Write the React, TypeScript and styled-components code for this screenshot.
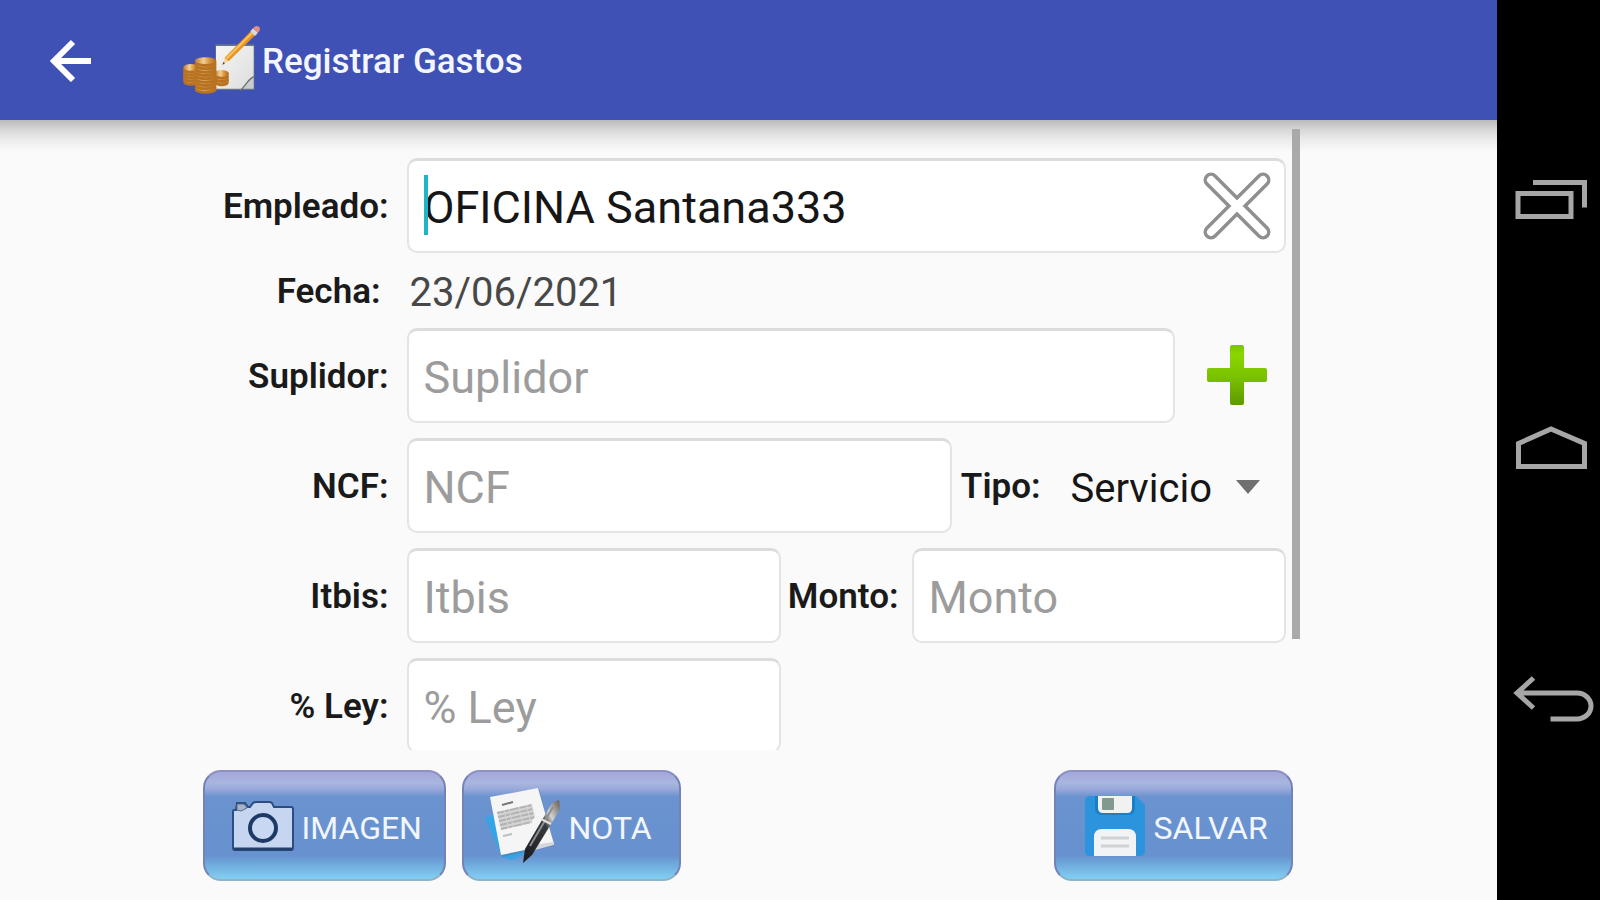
import React from "react";
import styled, { createGlobalStyle } from "styled-components";

const GlobalStyle = createGlobalStyle`
  *, *::before, *::after { box-sizing: border-box; }
  body {
    margin: 0;
    background: #fafafa;
    font-family: Roboto, "Noto Sans", sans-serif;
    color: #1a1a1a;
  }
  button, input, select { font-family: inherit; }
`;

const Screen = styled.div`
  display: flex;
  height: 100vh;
`;

const AppPane = styled.div`
  flex: 1;
  min-width: 0;
  display: flex;
  flex-direction: column;
  background: #fafafa;
`;

const AppBar = styled.header`
  position: relative;
  display: flex;
  align-items: center;
  height: 120px;
  flex: none;
  padding-left: 41px;
  background: #3f51b5;

  &::after {
    content: "";
    position: absolute;
    top: 100%;
    left: 0;
    right: 0;
    height: 32px;
    background: linear-gradient(
      rgba(0, 0, 0, 0.26),
      rgba(0, 0, 0, 0.14) 30%,
      rgba(0, 0, 0, 0.05) 65%,
      rgba(0, 0, 0, 0)
    );
    pointer-events: none;
  }
`;

const IconButton = styled.button<{ $width: number; $height: number }>`
  display: flex;
  align-items: center;
  justify-content: center;
  flex: none;
  width: ${(p) => p.$width}px;
  height: ${(p) => p.$height}px;
  padding: 0;
  border: 0;
  background: none;
  cursor: pointer;
`;

const Brand = styled.div`
  display: flex;
  align-items: center;
  margin-left: 82px;
`;

const Title = styled.h1`
  margin: 0;
  padding-top: 4px;
  font-size: 35px;
  line-height: 44px;
  font-weight: 500;
  color: #f4f6ff;
`;

const Form = styled.form`
  flex: 1;
  min-height: 0;
  display: flex;
  flex-direction: column;
  width: 100%;
  max-width: 1102px;
  margin: 0 auto;
`;

const ScrollPane = styled.div`
  flex: 1;
  min-height: 0;
  display: flex;
`;

const Fields = styled.div`
  flex: 1;
  min-width: 0;
  padding: 30px 6px 0 0;
  overflow-y: auto;
  scrollbar-width: none;
`;

const ScrollThumb = styled.div`
  flex: none;
  position: relative;
  z-index: 1;
  width: 8px;
  height: 81%;
  margin-top: 9px;
  background: #a9a9a9;
`;

const Row = styled.div<{ $height?: number }>`
  display: flex;
  align-items: center;
  height: ${(p) => p.$height ?? 110}px;
`;

const Label = styled.label<{ $width?: number; $end?: number }>`
  flex: none;
  width: ${(p) => p.$width ?? 209}px;
  padding: 4px ${(p) => p.$end ?? 18}px 0 0;
  font-size: 35px;
  line-height: 44px;
  font-weight: 600;
  text-align: right;
  white-space: nowrap;
`;

const FieldBox = styled.div<{ $half?: boolean }>`
  position: relative;
  display: flex;
  align-items: center;
  flex: ${(p) => (p.$half ? "0 0 calc((100% - 340px) / 2)" : "1")};
  min-width: 0;
  height: 95px;
  border: 2px solid #e4e4e4;
  border-top: 3px solid #dcdcdc;
  border-radius: 10px;
  background: #fff;
`;

const TextInput = styled.input`
  flex: 1;
  min-width: 0;
  height: 100%;
  padding: 4px 0 0 15px;
  border: 0;
  outline: 0;
  background: none;
  font-size: 45px;
  color: #161616;

  &::placeholder { color: #9c9c9c; opacity: 1; }
`;

const Caret = styled.span`
  position: absolute;
  left: 15px;
  top: 14px;
  width: 4px;
  height: 60px;
  background: #1fb5c6;
`;

const DateValue = styled.output`
  padding: 6px 0 0 3px;
  font-size: 40px;
  line-height: 48px;
  color: #484848;
`;

const SelectBox = styled.div`
  display: flex;
  align-items: center;
  flex: none;
  width: 215px;
  padding-top: 8px;
`;

const Select = styled.select`
  appearance: none;
  flex: 1;
  min-width: 0;
  padding: 0;
  border: 0;
  outline: 0;
  background: none;
  font-size: 40px;
  line-height: 48px;
  color: #161616;
`;

const DropMark = styled.svg`
  flex: none;
  margin: 0 26px 4px 0;
  pointer-events: none;
`;

const Actions = styled.div`
  flex: none;
  display: flex;
  gap: 16px;
  padding: 20px 7px 19px 5px;
`;

const ActionButton = styled.button<{ $width: number; $inset: number; $last?: boolean }>`
  display: flex;
  align-items: center;
  gap: 8px;
  width: ${(p) => p.$width}px;
  height: 111px;
  margin-left: ${(p) => (p.$last ? "auto" : "0")};
  padding: 0 0 0 ${(p) => p.$inset}px;
  border: 2px solid #7482b8;
  border-top-color: #8c90c4;
  border-bottom-color: #8fb4c8;
  border-radius: 18px;
  background: linear-gradient(
    #a3a7d8 0%,
    #a9b6df 10%,
    #9aa9db 16%,
    #6a93cf 23%,
    #6791cf 78%,
    #6fa9dc 86%,
    #82d0f3 100%
  );
  font-size: 32px;
  line-height: 40px;
  color: #f2f6ff;
  cursor: pointer;
`;

const ActionText = styled.span`
  padding-top: 4px;
`;

const NavBar = styled.nav`
  flex: none;
  display: flex;
  flex-direction: column;
  justify-content: space-between;
  width: 103px;
  padding: 150px 0;
  background: #000;
`;

const BackArrow = () => (
  <svg width="44" height="44" viewBox="0 0 44 44" fill="none" stroke="#fff" strokeWidth="6">
    <path d="M42 23H6M24 4L5 23l19 19" />
  </svg>
);

const coin = (cx: number, cy: number, rx: number) => (
  <g key={`${cx}-${cy}`}>
    <path d={`M${cx - rx} ${cy}v9a${rx} 10 0 0 0 ${2 * rx} 0v-9z`} fill="#b87322" />
    <ellipse cx={cx} cy={cy} rx={rx} ry="10" fill="url(#coin)" />
  </g>
);

const ExpenseLogo = () => (
  <svg width="79" height="72" viewBox="40 40 237 216" aria-hidden="true">
    <defs>
      <linearGradient id="coin">
        <stop offset="0" stopColor="#c07a24" />
        <stop offset=".4" stopColor="#f3cf96" />
        <stop offset=".65" stopColor="#dc9a42" />
        <stop offset="1" stopColor="#ac681c" />
      </linearGradient>
      <linearGradient id="sheet" x1="0" y1="0" x2="1" y2="1">
        <stop offset="0" stopColor="#f5f5f3" />
        <stop offset="1" stopColor="#dcdedd" />
      </linearGradient>
    </defs>
    <path d="M137 101H254V238H137z" fill="#66758a" />
    <path d="M139 106H252V202L220 234H139z" fill="url(#sheet)" />
    <path d="M220 234C229 221 232 210 252 200V234z" fill="#c9cccd" />
    <path d="M211 240C229 225 232 207 254 197" fill="none" stroke="#6b7174" strokeWidth="4" />
    {[208, 198, 188].map((y) => coin(156, y, 21))}
    {[206, 197, 188, 179, 170].map((y) => coin(64, y, 23))}
    {[230, 220, 210, 200, 190, 180, 170, 160, 150].map((y) => coin(108, y, 32))}
    <path d="M158 163L166 140L178 150z" fill="#f5d9a4" />
    <path d="M158 163L161 154L166 158z" fill="#554330" />
    <path d="M165 141L244 61L257 73L177 152z" fill="#e79425" />
    <path d="M169 141L246 64L250 68L173 146z" fill="#ffc361" />
    <path d="M242 62L250 53L265 66L256 76z" fill="#d6d9dd" />
    <path d="M250 53L257 47Q266 44 270 51Q273 58 264 67z" fill="#e5907e" />
  </svg>
);

const ClearIcon = () => (
  <svg width="70" height="70" viewBox="0 0 70 70" fill="none" aria-hidden="true">
    <g strokeLinecap="round">
      <path d="M9 9L61 61M61 9L9 61" stroke="#8f8f8f" strokeWidth="15" />
      <path d="M9 9L61 61M61 9L9 61" stroke="#fff" strokeWidth="8" />
    </g>
  </svg>
);

const PlusIcon = () => (
  <svg width="62" height="62" viewBox="0 0 62 62" aria-hidden="true">
    <defs>
      <linearGradient id="plus" x1="0" y1="0" x2="0" y2="1">
        <stop offset="0" stopColor="#7cc400" />
        <stop offset=".15" stopColor="#8ad600" />
        <stop offset=".5" stopColor="#7cc400" />
        <stop offset="1" stopColor="#5d9a00" />
      </linearGradient>
    </defs>
    <path
      d="M26 1h10a2 2 0 0 1 2 2v21h21a2 2 0 0 1 2 2v10a2 2 0 0 1-2 2H38v21a2 2 0 0 1-2 2H26a2 2 0 0 1-2-2V38H3a2 2 0 0 1-2-2V26a2 2 0 0 1 2-2h21V3a2 2 0 0 1 2-2z"
      fill="url(#plus)"
    />
  </svg>
);

const AddButton = styled(IconButton)`
  margin-left: 14px;
`;

const CameraIcon = () => (
  <svg width="62" height="50" viewBox="0 0 62 50" aria-hidden="true">
    <path
      d="M2 9Q1 9 1 11V47Q1 49 3 49H59Q61 49 61 47V8Q61 6 59 6H42L40 2Q39 1 37 1H24Q22 1 21 2L18 6H16L13 2H5L4 9z"
      fill="#c6d6f1"
      stroke="#2a4d82"
      strokeWidth="2"
    />
    <path d="M5 9V3H12L15 7L9 10z" fill="#a9b3c3" stroke="#56688a" strokeWidth="1" />
    <path d="M2 48H60" stroke="#233f6c" strokeWidth="3" />
    <circle cx="31" cy="27" r="13" fill="#c9d8f2" stroke="#1d3a66" strokeWidth="4" />
  </svg>
);

const NoteIcon = () => (
  <svg width="76" height="78" viewBox="0 0 76 78" aria-hidden="true">
    <defs>
      <linearGradient id="pen" x1="0" y1="1" x2="1" y2="0">
        <stop offset="0" stopColor="#17191c" />
        <stop offset=".6" stopColor="#383b3e" />
        <stop offset=".75" stopColor="#d5d3ce" />
        <stop offset="1" stopColor="#5d574f" />
      </linearGradient>
    </defs>
    <path d="M0 31L8 27L40 67L27 73L17 70z" fill="#36a4e4" />
    <path d="M5 11L54 1L69 59L17 70z" fill="#5475a0" opacity=".5" />
    <path d="M5 10L53 1L69 57L16 68z" fill="#f5f5f5" />
    <path d="M47 58L69 55V58L50 63z" fill="#d4d8dd" />
    <path d="M12 25L47 17L50 30L45 36L16 43z" fill="#d3d3d3" />
    <g stroke="#a8a8a8" strokeWidth="2">
      <path d="M17 18L28 15" stroke="#777" />
      <g strokeDasharray="7 1 4 1 9 1" opacity=".75">
        <path d="M12 26L47 18M13 30L48 22M14 34L49 26M15 38L50 30M16 42L47 35" />
      </g>
      <path d="M18 49L27 47" opacity=".7" />
    </g>
    <path d="M38 76L40 62L67 16L74 13L75 21L71 29L47 68z" fill="url(#pen)" />
    <path d="M45 59L68 20" stroke="#8d9093" strokeWidth="2" />
    <path d="M56 32L66 37" stroke="#e5e3de" strokeWidth="2" />
  </svg>
);

const SaveIcon = () => (
  <svg width="62" height="62" viewBox="0 0 62 62" aria-hidden="true">
    <path d="M6 1H52L61 10V56Q61 61 56 61H6Q1 61 1 56V6Q1 1 6 1z" fill="#2b94dc" />
    <path d="M11 1H51V13Q51 20 44 20H18Q11 20 11 13z" fill="#1b7fc4" />
    <path d="M14 1H48V13Q48 18 43 18H19Q14 18 14 13z" fill="#f0f2f1" />
    <rect x="18" y="3" width="12" height="12" rx="1" fill="#82998f" />
    <path d="M10 61V42Q10 34 18 34H44Q52 34 52 42V61z" fill="#f1f3f4" />
    <path d="M17 43H45M17 51H45" stroke="#d0d3d5" strokeWidth="3" />
  </svg>
);

const NavIcon = ({ d }: { d: string }) => (
  <svg width="103" height="100" viewBox="0 0 103 100" fill="none" stroke="#a6a6a6" strokeWidth="5" aria-hidden="true">
    <path d={d} />
  </svg>
);

const navItems = [
  { name: "Recientes", d: "M21 43.5H74V66.5H21zM36 32.5H87.5V57.5" },
  { name: "Inicio", d: "M21.5 43.5L54 29L87.5 43.5V66.5H21.5z" },
  { name: "Atrás", d: "M20 43H80A14 13 0 0 1 80 69H53.5M36.5 28L20 43L36.5 58" },
];

export default function App() {
  return (
    <Screen>
      <GlobalStyle />
      <AppPane>
        <AppBar>
          <IconButton type="button" aria-label="Volver" $width={60} $height={60}>
            <BackArrow />
          </IconButton>
          <Brand>
            <ExpenseLogo />
            <Title>Registrar Gastos</Title>
          </Brand>
        </AppBar>
        <Form onSubmit={(e) => e.preventDefault()}>
          <ScrollPane>
            <Fields>
              <Row>
                <Label htmlFor="empleado">Empleado:</Label>
                <FieldBox>
                  <Caret />
                  <TextInput id="empleado" defaultValue="OFICINA Santana333" />
                  <IconButton type="button" aria-label="Borrar" $width={94} $height={90}>
                    <ClearIcon />
                  </IconButton>
                </FieldBox>
              </Row>
              <Row $height={60}>
                <Label htmlFor="fecha" $end={26}>Fecha:</Label>
                <DateValue id="fecha">23/06/2021</DateValue>
              </Row>
              <Row>
                <Label htmlFor="suplidor">Suplidor:</Label>
                <FieldBox>
                  <TextInput id="suplidor" placeholder="Suplidor" />
                </FieldBox>
                <AddButton type="button" aria-label="Agregar suplidor" $width={97} $height={95}>
                  <PlusIcon />
                </AddButton>
              </Row>
              <Row>
                <Label htmlFor="ncf">NCF:</Label>
                <FieldBox>
                  <TextInput id="ncf" placeholder="NCF" />
                </FieldBox>
                <Label htmlFor="tipo" $width={119} $end={30}>Tipo:</Label>
                <SelectBox>
                  <Select id="tipo" defaultValue="Servicio">
                    <option>Servicio</option>
                    <option>Bienes</option>
                  </Select>
                  <DropMark width="24" height="14" viewBox="0 0 24 14">
                    <path d="M0 0H24L12 14z" fill="#707070" />
                  </DropMark>
                </SelectBox>
              </Row>
              <Row>
                <Label htmlFor="itbis">Itbis:</Label>
                <FieldBox>
                  <TextInput id="itbis" placeholder="Itbis" />
                </FieldBox>
                <Label htmlFor="monto" $width={131} $end={13}>Monto:</Label>
                <FieldBox>
                  <TextInput id="monto" placeholder="Monto" />
                </FieldBox>
              </Row>
              <Row>
                <Label htmlFor="ley">% Ley:</Label>
                <FieldBox $half>
                  <TextInput id="ley" placeholder="% Ley" />
                </FieldBox>
              </Row>
            </Fields>
            <ScrollThumb />
          </ScrollPane>
          <Actions>
            <ActionButton type="button" $width={243} $inset={27}>
              <CameraIcon />
              <ActionText>IMAGEN</ActionText>
            </ActionButton>
            <ActionButton type="button" $width={219} $inset={21}>
              <NoteIcon />
              <ActionText>NOTA</ActionText>
            </ActionButton>
            <ActionButton type="submit" $width={239} $inset={28} $last>
              <SaveIcon />
              <ActionText>SALVAR</ActionText>
            </ActionButton>
          </Actions>
        </Form>
      </AppPane>
      <NavBar>
        {navItems.map((item) => (
          <IconButton key={item.name} type="button" aria-label={item.name} $width={103} $height={100}>
            <NavIcon d={item.d} />
          </IconButton>
        ))}
      </NavBar>
    </Screen>
  );
}
